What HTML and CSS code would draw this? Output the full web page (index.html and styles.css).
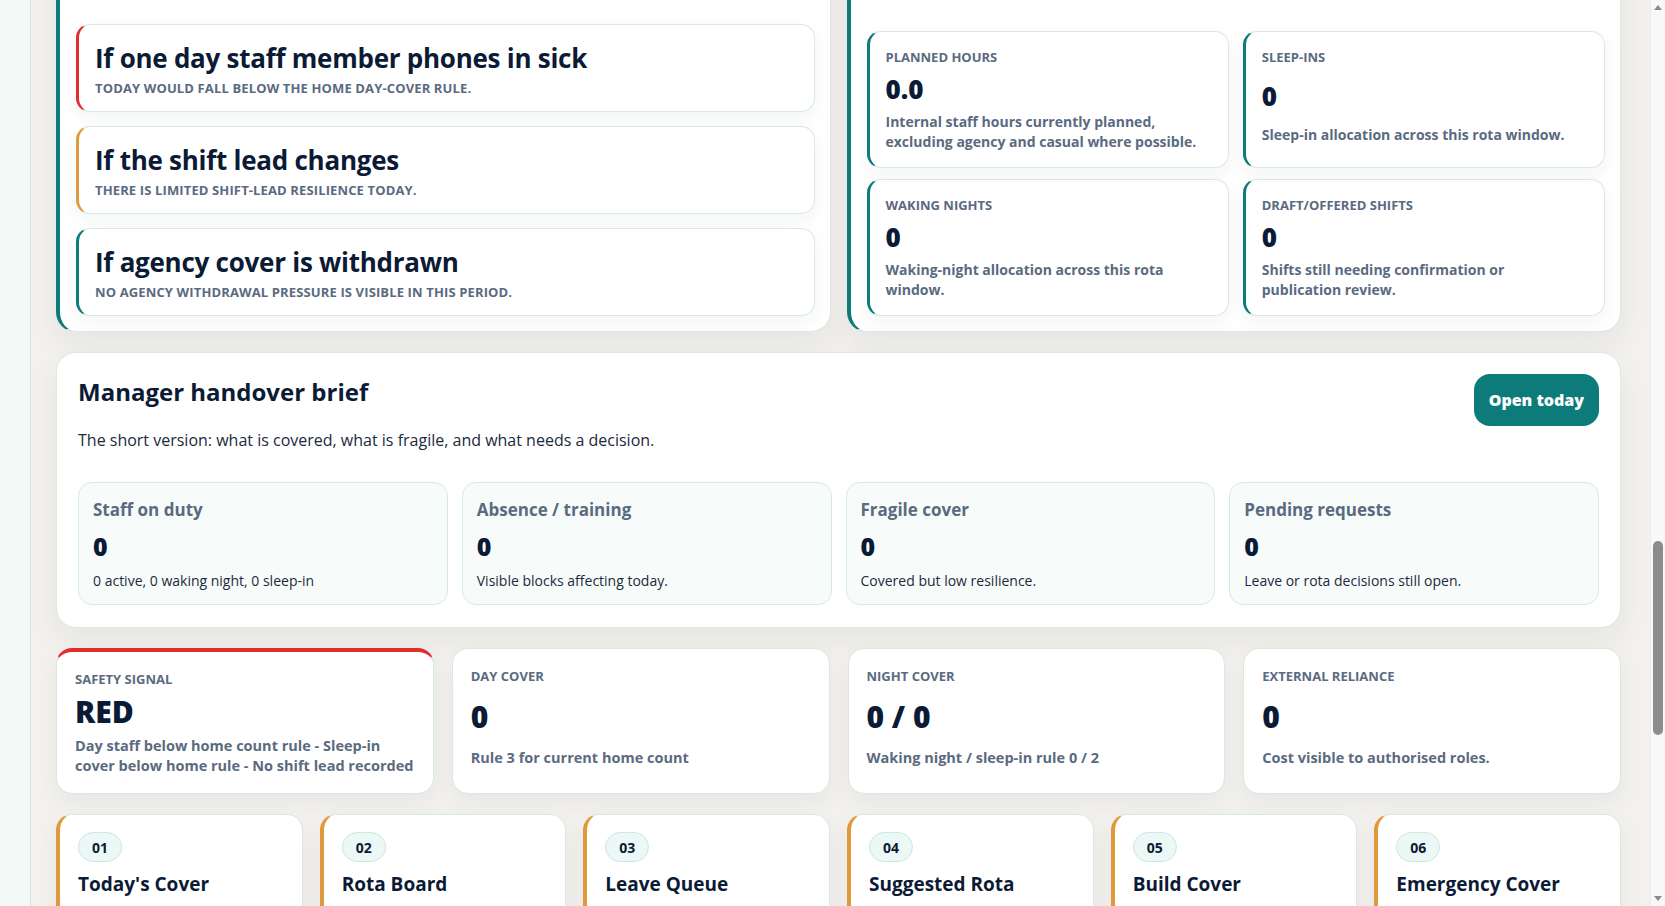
FILE: index.html
```html
<!DOCTYPE html>
<html lang="en">
<head>
<meta charset="utf-8">
<title>Rota &amp; cover · Oakfield House</title>
<link rel="stylesheet" href="styles.css">
</head>
<body>
<aside class="rail" aria-label="Navigation"></aside>

<main class="main">
  <header class="page-head">
    <div>
      <p class="eyebrow">Staffing</p>
      <h1>Rota &amp; cover</h1>
      <p class="lede">Oakfield House · rota window 9 June – 22 June</p>
    </div>
  </header>

  <div class="split">
    <section class="panel panel--rail">
      <div class="panel-head">
        <h2>What could break today</h2>
        <p>Pressure tests against the home rules.</p>
      </div>
      <div class="scenarios">
        <article class="scenario scenario--red">
          <h3>If one day staff member phones in sick</h3>
          <p>Today would fall below the home day-cover rule.</p>
        </article>
        <article class="scenario scenario--amber">
          <h3>If the shift lead changes</h3>
          <p>There is limited shift-lead resilience today.</p>
        </article>
        <article class="scenario scenario--teal">
          <h3>If agency cover is withdrawn</h3>
          <p>No agency withdrawal pressure is visible in this period.</p>
        </article>
      </div>
    </section>

    <section class="panel panel--rail">
      <div class="panel-head">
        <h2>Rota window totals</h2>
        <p>Hours and night cover in this window.</p>
      </div>
      <div class="metrics">
        <article class="metric">
          <span class="metric-label">Planned hours</span>
          <strong class="metric-value">0.0</strong>
          <p class="metric-text">Internal staff hours currently planned, excluding agency and casual where possible.</p>
        </article>
        <article class="metric">
          <span class="metric-label">Sleep-ins</span>
          <strong class="metric-value">0</strong>
          <p class="metric-text">Sleep-in allocation across this rota window.</p>
        </article>
        <article class="metric">
          <span class="metric-label">Waking nights</span>
          <strong class="metric-value">0</strong>
          <p class="metric-text">Waking-night allocation across this rota window.</p>
        </article>
        <article class="metric">
          <span class="metric-label">Draft/offered shifts</span>
          <strong class="metric-value">0</strong>
          <p class="metric-text">Shifts still needing confirmation or publication review.</p>
        </article>
      </div>
    </section>
  </div>

  <section class="panel brief">
    <div class="brief-head">
      <div class="brief-intro">
        <h2>Manager handover brief</h2>
        <p>The short version: what is covered, what is fragile, and what needs a decision.</p>
      </div>
      <button class="btn" type="button">Open today</button>
    </div>
    <div class="stats">
      <article class="stat">
        <span class="stat-label">Staff on duty</span>
        <strong class="stat-value">0</strong>
        <p class="stat-text">0 active, 0 waking night, 0 sleep-in</p>
      </article>
      <article class="stat">
        <span class="stat-label">Absence / training</span>
        <strong class="stat-value">0</strong>
        <p class="stat-text">Visible blocks affecting today.</p>
      </article>
      <article class="stat">
        <span class="stat-label">Fragile cover</span>
        <strong class="stat-value">0</strong>
        <p class="stat-text">Covered but low resilience.</p>
      </article>
      <article class="stat">
        <span class="stat-label">Pending requests</span>
        <strong class="stat-value">0</strong>
        <p class="stat-text">Leave or rota decisions still open.</p>
      </article>
    </div>
  </section>

  <div class="signals">
    <article class="signal signal--alert">
      <span class="signal-label">Safety signal</span>
      <strong class="signal-value">RED</strong>
      <p class="signal-text">Day staff below home count rule - Sleep-in cover below home rule - No shift lead recorded</p>
    </article>
    <article class="signal">
      <span class="signal-label">Day cover</span>
      <strong class="signal-value">0</strong>
      <p class="signal-text">Rule 3 for current home count</p>
    </article>
    <article class="signal">
      <span class="signal-label">Night cover</span>
      <strong class="signal-value">0 / 0</strong>
      <p class="signal-text">Waking night / sleep-in rule 0 / 2</p>
    </article>
    <article class="signal">
      <span class="signal-label">External reliance</span>
      <strong class="signal-value">0</strong>
      <p class="signal-text">Cost visible to authorised roles.</p>
    </article>
  </div>

  <nav class="modules" aria-label="Rota tools">
    <a class="module" href="#today"><span class="badge">01</span><h3>Today's Cover</h3></a>
    <a class="module" href="#board"><span class="badge">02</span><h3>Rota Board</h3></a>
    <a class="module" href="#leave"><span class="badge">03</span><h3>Leave Queue</h3></a>
    <a class="module" href="#suggest"><span class="badge">04</span><h3>Suggested Rota</h3></a>
    <a class="module" href="#build"><span class="badge">05</span><h3>Build Cover</h3></a>
    <a class="module" href="#emergency"><span class="badge">06</span><h3>Emergency Cover</h3></a>
  </nav>
</main>

<!-- classic page scrollbar -->
<div class="scrollbar" aria-hidden="true">
  <span class="scrollbar-arrow scrollbar-arrow--up"></span>
  <span class="scrollbar-thumb"></span>
  <span class="scrollbar-arrow scrollbar-arrow--down"></span>
</div>

<script src="app.js"></script>
</body>
</html>
```

FILE: styles.css
```css
:root {
  --ink: #0c1b35;
  --muted: #5a6a80;
  --teal: #0e7b7b;
  --red: #e12d2d;
  --amber: #de9a3c;
  --line: #d6e9e6;
  --page: #f2f1ee;
  --font: "Open Sans", "Noto Sans", "Liberation Sans", sans-serif;
}

* { box-sizing: border-box; }

html, body { margin: 0; }

body {
  display: flex;
  min-height: 100vh;
  background: var(--page);
  color: var(--ink);
  font-family: var(--font);
}

h1, h2, h3, p { margin: 0; }

/* collapsed navigation rail */
.rail {
  flex: 0 0 31px;
  background: #f2f8f6;
  border-right: 1px solid #d4e6e2;
}

/* right padding leaves room for the 15px scrollbar */
.main {
  flex: 1;
  min-width: 0;
  padding: 24px 44px 40px 25px;
  display: flex;
  flex-direction: column;
  gap: 20px;
}

/* page header */
.page-head { padding: 8px 0; }
.eyebrow {
  font-size: 13px;
  font-weight: 700;
  text-transform: uppercase;
  color: var(--teal);
  letter-spacing: 0.04em;
}
.page-head h1 { font-size: 34px; line-height: 44px; }
.lede { font-size: 16px; color: var(--muted); }

.btn {
  flex: 0 0 auto;
  font: 800 16px/20px var(--font);
  border: 0;
  border-radius: 16px;
  padding: 16px 15px;
  background: var(--teal);
  color: #fff;
  cursor: pointer;
}

/* shared panel */
.panel {
  background: #fff;
  border: 1px solid #d9e9e6;
  border-radius: 20px;
  box-shadow: 0 12px 30px rgba(20, 40, 40, 0.06);
}
.panel-head h2 { font-size: 24px; line-height: 30px; }
.panel-head p { font-size: 15px; line-height: 22px; color: var(--muted); margin-top: 4px; }

/* two column block */
.split {
  display: grid;
  grid-template-columns: 1fr 1fr;
  gap: 16px;
}
.panel--rail {
  border-left: 4px solid var(--teal);
  padding: 20px 15px 15px 16px;
  display: flex;
  flex-direction: column;
  gap: 40px;
}

.scenarios {
  margin-top: auto;
  display: flex;
  flex-direction: column;
  gap: 14px;
}
.scenario {
  background: #fff;
  border: 1px solid var(--line);
  border-left: 3px solid var(--teal);
  border-radius: 14px;
  padding: 17px 16px 14px 16px;
  box-shadow: 0 6px 18px rgba(20, 40, 40, 0.05);
}
.scenario--red { border-left-color: var(--red); }
.scenario--amber { border-left-color: var(--amber); }
.scenario h3 {
  font-size: 26px;
  line-height: 32px;
  font-weight: 700;
  color: var(--ink);
  letter-spacing: -0.01em;
}
.scenario p {
  margin-top: 5px;
  font-size: 13px;
  line-height: 18px;
  font-weight: 700;
  letter-spacing: 0.01em;
  text-transform: uppercase;
  color: var(--muted);
}

.metrics {
  margin-top: auto;
  display: grid;
  grid-template-columns: 1fr 1fr;
  gap: 11px 14px;
}
.metric {
  display: grid;
  gap: 8px;
  border: 1px solid var(--line);
  border-left: 3px solid var(--teal);
  border-radius: 14px;
  padding: 16px 20px 15px 16px;
  box-shadow: 0 6px 18px rgba(20, 40, 40, 0.05);
}
.metric-label {
  font-size: 13px;
  line-height: 18px;
  font-weight: 700;
  text-transform: uppercase;
  color: var(--muted);
}
.metric-value { font-size: 26px; line-height: 30px; font-weight: 800; }
.metric-text { font-size: 14px; line-height: 20px; font-weight: 700; color: var(--muted); }

/* handover brief */
.brief { padding: 21px 21px 22px 21px; }
.brief-head {
  display: flex;
  justify-content: space-between;
  align-items: flex-start;
  gap: 24px;
}
.brief-intro { padding-top: 3px; }
.brief-intro h2 { font-size: 24px; line-height: 30px; font-weight: 700; }
.brief-intro p { margin-top: 21px; font-size: 16px; line-height: 24px; color: #1b2a3c; }

.stats {
  margin-top: 30px;
  display: grid;
  grid-template-columns: repeat(4, 1fr);
  gap: 14px;
}
.stat {
  display: grid;
  gap: 10px;
  background: #f7fcfb;
  border: 1px solid #d3ebe7;
  border-radius: 14px;
  padding: 16px 14px 13px;
}
.stat-label { font-size: 17px; line-height: 22px; font-weight: 700; color: var(--muted); }
.stat-value { font-size: 25px; line-height: 30px; font-weight: 800; }
.stat-text { font-size: 14px; line-height: 20px; color: #1b2a3c; }

/* signal cards */
.signals {
  display: grid;
  grid-template-columns: repeat(4, 1fr);
  gap: 18px;
}
.signal {
  display: grid;
  gap: 6px;
  background: #fff;
  border: 1px solid var(--line);
  border-radius: 16px;
  padding: 18px 18px 17px 18px;
  box-shadow: 0 8px 22px rgba(20, 40, 40, 0.05);
}
.signal--alert { border-top: 4px solid var(--red); }
.signal-label {
  font-size: 13px;
  line-height: 18px;
  font-weight: 700;
  text-transform: uppercase;
  color: var(--muted);
}
.signal-value { font-size: 30px; line-height: 36px; font-weight: 800; }
.signal-text { font-size: 14.5px; line-height: 20px; font-weight: 700; color: var(--muted); }

/* tool tiles */
.modules {
  display: grid;
  grid-template-columns: repeat(6, 1fr);
  gap: 17px;
}
.module {
  display: flex;
  flex-direction: column;
  align-items: flex-start;
  background: #fff;
  border: 1px solid var(--line);
  border-left: 4px solid var(--amber);
  border-radius: 16px;
  padding: 17px 18px 40px;
  color: var(--ink);
  text-decoration: none;
  box-shadow: 0 8px 22px rgba(20, 40, 40, 0.05);
}
.badge {
  min-width: 44px;
  height: 30px;
  padding: 0 10px;
  display: inline-flex;
  align-items: center;
  justify-content: center;
  border-radius: 999px;
  background: #ebf8f5;
  border: 1px solid #cbe8e1;
  font-size: 14px;
  font-weight: 700;
}
.module h3 { margin-top: 9px; font-size: 19px; line-height: 26px; font-weight: 700; }

/* scrollbar drawn at the viewport edge */
.scrollbar {
  position: fixed;
  top: 0;
  right: 0;
  width: 15px;
  height: 100vh;
  background: #f8f8f8;
  border-left: 1px solid #ececec;
}
.scrollbar-arrow {
  position: absolute;
  left: 3px;
  width: 0;
  height: 0;
  border-left: 4px solid transparent;
  border-right: 4px solid transparent;
}
.scrollbar-arrow--up { top: 5px; border-bottom: 5px solid #8a8a8a; }
.scrollbar-arrow--down { bottom: 5px; border-top: 5px solid #8a8a8a; }
.scrollbar-thumb {
  position: absolute;
  left: 2px;
  top: 541px;
  width: 10px;
  height: 194px;
  border-radius: 5px;
  background: #8c8c8c;
}
```

FILE: app.js
```js
function restoreView() {
  const brief = document.querySelector('.brief');
  const top = brief.getBoundingClientRect().top + window.scrollY - 352;
  window.scrollTo(0, top);
}
restoreView();
window.addEventListener('load', restoreView);
```
